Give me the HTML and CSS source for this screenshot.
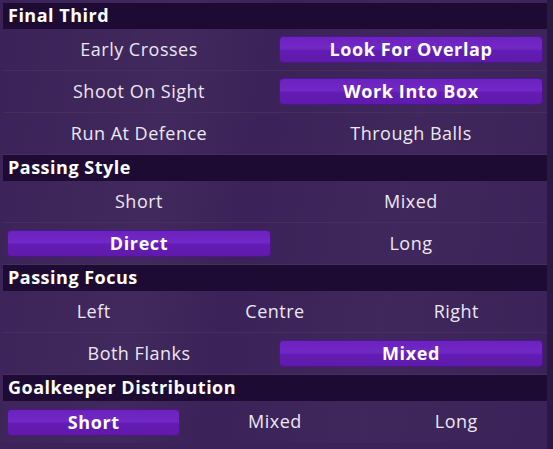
FILE: index.html
```html
<!DOCTYPE html>
<html>
<head>
<meta charset="utf-8">
<link rel="stylesheet" href="styles.css">
</head>
<body>
<div class="panel">
  <div class="head">Final Third</div>
  <div class="row two"><div class="cell">Early Crosses</div><div class="cell"><span class="btn">Look For Overlap</span></div></div>
  <div class="row two"><div class="cell">Shoot On Sight</div><div class="cell"><span class="btn">Work Into Box</span></div></div>
  <div class="row two"><div class="cell">Run At Defence</div><div class="cell">Through Balls</div></div>

  <div class="head">Passing Style</div>
  <div class="row two"><div class="cell">Short</div><div class="cell">Mixed</div></div>
  <div class="row two"><div class="cell"><span class="btn">Direct</span></div><div class="cell">Long</div></div>

  <div class="head">Passing Focus</div>
  <div class="row three"><div class="cell">Left</div><div class="cell">Centre</div><div class="cell">Right</div></div>
  <div class="row two"><div class="cell">Both Flanks</div><div class="cell"><span class="btn">Mixed</span></div></div>

  <div class="head">Goalkeeper Distribution</div>
  <div class="row three last"><div class="cell"><span class="btn">Short</span></div><div class="cell">Mixed</div><div class="cell">Long</div></div>
</div>
</body>
</html>
```
FILE: styles.css
```css
html, body {
  margin: 0;
  padding: 0;
}
body {
  width: 553px;
  height: 449px;
  overflow: hidden;
  background: linear-gradient(to right, #3b2258 0, #3b2258 547px, #2b1843 547px);
  font-family: "Open Sans", "Noto Sans", sans-serif;
  color: #ece7f2;
}
.panel {
  width: 544px;
  padding: 3px 0 0 3px;
  background:
    linear-gradient(100deg, rgba(255,255,255,0) 0%, rgba(255,255,255,0.03) 30%, rgba(255,255,255,0) 45%, rgba(255,255,255,0.025) 70%, rgba(255,255,255,0) 100%);
}
.head {
  height: 26px;
  background: #1d0b33;
  color: #ffffff;
  font-weight: 700;
  font-size: 18px;
  letter-spacing: 0.5px;
  line-height: 25px;
  padding-left: 5px;
  box-sizing: border-box;
}
.row {
  height: 42px;
  display: grid;
  border-bottom: 1px solid #44305c;
  box-sizing: border-box;
}
.row.last { border-bottom: none; }
.two { grid-template-columns: 1fr 1fr; }
.three { grid-template-columns: 1fr 1fr 1fr; }
.cell {
  display: flex;
  align-items: center;
  justify-content: center;
  padding: 0 4px 2px;
  font-size: 18px;
  letter-spacing: 0.5px;
}
.btn {
  flex: 1;
  height: 27px;
  margin-top: 2px;
  box-sizing: border-box;
  border: 1px solid #4c168f;
  border-radius: 4px;
  background: linear-gradient(to bottom, #6c22bd 0%, #7128c6 45%, #631cb2 55%, #5f1aab 100%);
  color: #ffffff;
  font-weight: 700;
  text-align: center;
  line-height: 24px;
  font-size: 18px;
  letter-spacing: 0.6px;
}
```
